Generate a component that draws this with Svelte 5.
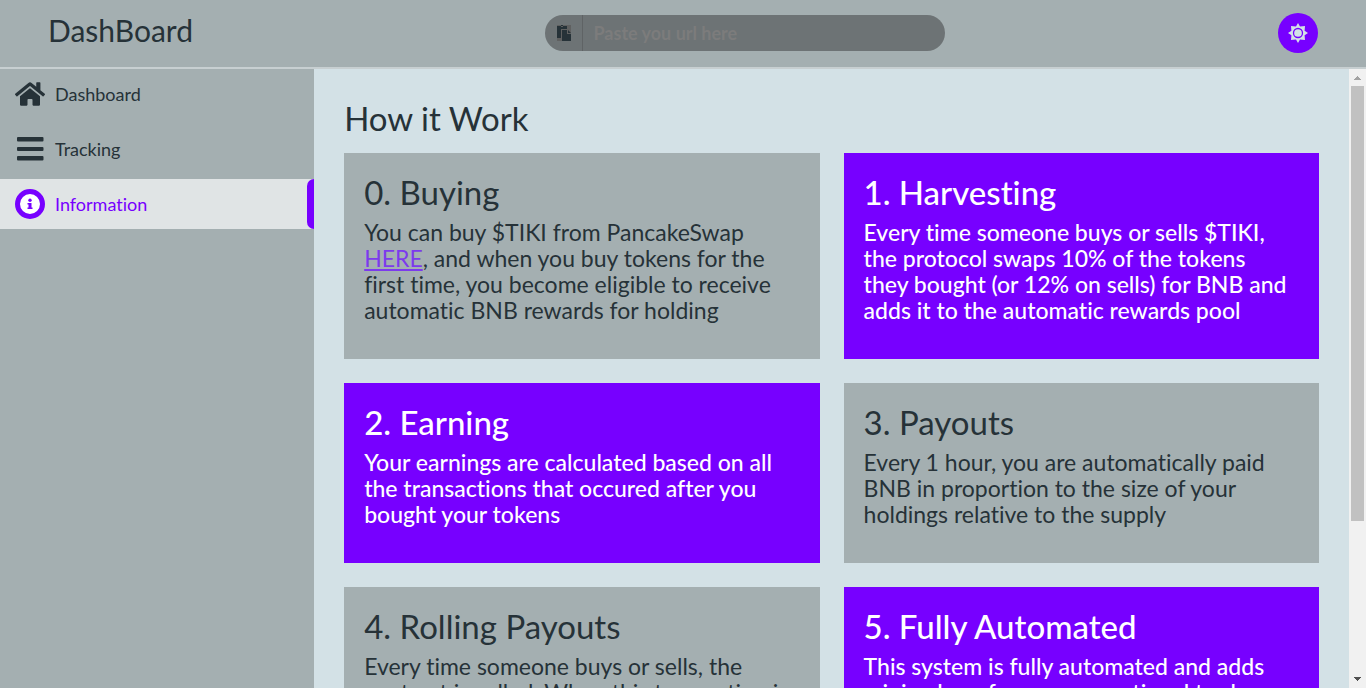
<script>
  import { onMount } from 'svelte';

  const nav = [
    { label: 'Dashboard', icon: 'home' },
    { label: 'Tracking', icon: 'bars' },
    { label: 'Information', icon: 'info' }
  ];
  let active = $state('Information');
  let url = $state('');

  const steps = [
    { title: '1. Harvesting', text: 'Every time someone buys or sells $TIKI,\nthe protocol swaps 10% of the tokens\nthey bought (or 12% on sells) for BNB and adds it to the automatic rewards pool' },
    { title: '2. Earning', text: 'Your earnings are calculated based on all the transactions that occured after you bought your tokens' },
    { title: '3. Payouts', text: 'Every 1 hour, you are automatically paid BNB in proportion to the size of your holdings relative to the supply' },
    { title: '4. Rolling Payouts', text: 'Every time someone buys or sells, the contract is called. When this transaction is processed, the contract also pays out the holders who are next in the queue, so rewards keep rolling for as long as there is steady trading volume on the token from buyers and sellers' },
    { title: '5. Fully Automated', text: 'This system is fully automated and adds minimal gas fees per operational trade, shared between everyone who buys or sells' }
  ];

  let view;
  let top = $state(0);
  let size = $state(74);

  function measure() {
    size = (view.clientHeight / view.scrollHeight) * 100;
    top = (view.scrollTop / view.scrollHeight) * 100;
  }
  function nudge(amount) {
    view.scrollBy({ top: amount });
  }
  onMount(measure);
</script>

<svelte:window onresize={measure} />

<div class="page">
  <header>
    <div class="brand">DashBoard</div>
    <form class="search" onsubmit={(e) => e.preventDefault()}>
      <button type="button" class="paste" aria-label="Paste">
        <svg viewBox="0 0 14 16" width="14" height="16">
          <path fill="#5f6060" d="M0 0h14v16H0z" />
          <path fill="#263238" d="M0 1h4v1h2V1h4v3H4v9H0zM4 0h2v1H4zM5 5h5v4h4v7H5zM11 5l3 3h-3z" />
        </svg>
      </button>
      <input type="text" aria-label="Url" placeholder="Paste you url here" bind:value={url} />
    </form>
    <button type="button" class="theme" aria-label="Toggle theme">
      <svg viewBox="0 0 20 20" width="20" height="20">
        <path fill="#d3e1e6" d="M10 0l2 3.400 5-.500-.400 4.900L20 10l-3.400 2.200.4 4.900-5-.500L10 20l-2-3.400-5 .500.400-4.900L0 10l3.400-2.200L3 2.900l5 .500z" />
        <circle cx="10" cy="10" r="4.500" fill="#d3e1e6" stroke="#7700ff" stroke-width="1.300" />
      </svg>
    </button>
  </header>

  <div class="body">
    <nav>
      {#each nav as item}
        <a href="#{item.icon}" class:active={active === item.label} onclick={() => (active = item.label)}>
          {#if item.icon === 'home'}
            <svg viewBox="0 0 576 512" width="30" height="30" fill="currentColor">
              <path d="M280.400 148.300L96 300.100V464a16 16 0 0 0 16 16l112.100-.300a16 16 0 0 0 15.900-16V368a16 16 0 0 1 16-16h64a16 16 0 0 1 16 16v95.600a16 16 0 0 0 16 16.100L464 480a16 16 0 0 0 16-16V300L295.700 148.300a12.200 12.200 0 0 0-15.300 0zM571.600 251.500L488 182.600V44.100a12 12 0 0 0-12-12h-56a12 12 0 0 0-12 12v72.600L318.500 43a48 48 0 0 0-61 0L4.300 251.500a12 12 0 0 0-1.600 16.900l25.500 31A12 12 0 0 0 45.200 301L280.400 107.200a12.200 12.200 0 0 1 15.300 0L530.900 301a12 12 0 0 0 16.900-1.600l25.500-31a12 12 0 0 0-1.700-16.900z" />
            </svg>
          {:else if item.icon === 'bars'}
            <svg viewBox="0 0 30 30" width="30" height="30" fill="currentColor">
              <rect x="2" y="3" width="26.500" height="4.500" rx="1" />
              <rect x="2" y="13" width="26.500" height="4" rx="1" />
              <rect x="2" y="22" width="26.500" height="4.500" rx="1" />
            </svg>
          {:else}
            <svg viewBox="0 0 30 30" width="30" height="30">
              <circle cx="15" cy="15" r="12.500" fill="#fff" stroke="currentColor" stroke-width="5" />
              <circle cx="15" cy="11.300" r="1.700" fill="currentColor" />
              <path fill="currentColor" d="M12.500 14h4v4.500h1V20h-5v-1.500h1v-3h-1z" />
            </svg>
          {/if}
          <span>{item.label}</span>
        </a>
      {/each}
    </nav>

    <main bind:this={view} onscroll={measure}>
      <h1>How it Work</h1>
      <div class="cards">
        <section class="card">
          <h2>0. Buying</h2>
          <p>You can buy $TIKI from PancakeSwap <a href="#buy">HERE</a>, and when you buy tokens for the first time, you become eligible to receive automatic BNB rewards for holding</p>
        </section>
        {#each steps as step, i}
          <section class="card" class:accent={i === 0 || i === 1 || i === 4}>
            <h2>{step.title}</h2>
            <p>{step.text}</p>
          </section>
        {/each}
      </div>
    </main>

    <div class="scrollbar">
      <button type="button" aria-label="Scroll up" onclick={() => nudge(-40)}>
        <svg viewBox="0 0 17 17" width="17" height="17"><path fill="#a3a3a3" d="M8 7h1v1h1v1h1v1h1v1H5v-1h1V9h1V8h1z" /></svg>
      </button>
      <div class="track">
        <div style="height: {top}%"></div>
        <div class="thumb" style="height: {size}%"></div>
      </div>
      <button type="button" aria-label="Scroll down" onclick={() => nudge(40)}>
        <svg viewBox="0 0 17 17" width="17" height="17"><path fill="#505050" d="M5 6h7v1h-1v1h-1v1H9v1H8V9H7V8H6V7H5z" /></svg>
      </button>
    </div>
  </div>
</div>

<style>
  :global(body) {
    margin: 0;
  }
  .page {
    display: flex;
    flex-direction: column;
    height: 100vh;
    overflow: hidden;
    background: #d3e1e6;
    color: #263238;
    font-family: Lato, "Open Sans", sans-serif;
    font-variant-ligatures: none;
  }
  button {
    padding: 0;
    border: 0;
    background: none;
    color: inherit;
    cursor: pointer;
  }
  svg {
    display: block;
    flex: none;
  }
  header {
    display: flex;
    justify-content: space-between;
    align-items: center;
    padding: 13px 48px 14px;
    background: #a4afb1;
  }
  .brand {
    padding: 0 18px 6px 0;
    font-size: 30px;
    line-height: 34px;
  }
  .search {
    display: flex;
    width: 400px;
    height: 36px;
    border-radius: 18px;
    overflow: hidden;
    background: #6d7375;
  }
  .paste {
    display: flex;
    align-items: center;
    width: 38px;
    padding-left: 12px;
    box-sizing: border-box;
    border-right: 1px solid #5f6365;
  }
  input {
    flex: 1;
    min-width: 0;
    padding: 0 11px;
    border: 0;
    outline: 0;
    background: none;
    color: #263238;
    font: bold 18px Lato, sans-serif;
  }
  input::placeholder {
    color: #7c7c7c;
    opacity: 1;
  }
  .theme {
    display: grid;
    place-items: center;
    width: 40px;
    height: 40px;
    border-radius: 50%;
    background: #7700ff;
  }
  .body {
    display: grid;
    grid-template-columns: 23% 1fr 17px;
    flex: 1;
    min-height: 0;
    border-top: 2px solid #c7cfd1;
  }
  nav {
    background: #a4afb1;
  }
  nav a {
    display: flex;
    align-items: center;
    gap: 10px;
    height: 50px;
    margin-bottom: 5px;
    padding-left: 15px;
    color: #263238;
    font-size: 18px;
    line-height: 20px;
    text-decoration: none;
  }
  nav a.active {
    background: #e0e4e5;
    color: #7700ff;
  }
  nav a.active::after {
    content: "";
    width: 7px;
    height: 50px;
    margin-left: auto;
    border-radius: 7px 0 0 7px;
    background: #7700ff;
  }
  main {
    overflow-y: auto;
    scrollbar-width: none;
    padding: 30px;
  }
  h1,
  h2,
  p {
    margin: 0;
    font-weight: 400;
  }
  h1,
  h2 {
    font-size: 33px;
    line-height: 38px;
  }
  h1 {
    margin-bottom: 16px;
  }
  h2 {
    margin-bottom: 8px;
  }
  .cards {
    display: grid;
    grid-template-columns: 1fr 1fr;
    gap: 24px;
  }
  .card {
    padding: 20px 20px 36px;
    background: #a4afb1;
  }
  p {
    font-size: 23px;
    line-height: 26px;
    white-space: pre-line;
  }
  p a {
    color: #7c3aed;
  }
  .accent {
    background: #7700ff;
    color: #fff;
  }
  .accent h2,
  .accent p {
    font-weight: 500;
  }
  .scrollbar {
    display: flex;
    flex-direction: column;
    background: #f1f1f1;
  }
  .track {
    flex: 1;
    min-height: 0;
  }
  .thumb {
    margin: 0 2px;
    background: #c1c1c1;
  }
</style>
